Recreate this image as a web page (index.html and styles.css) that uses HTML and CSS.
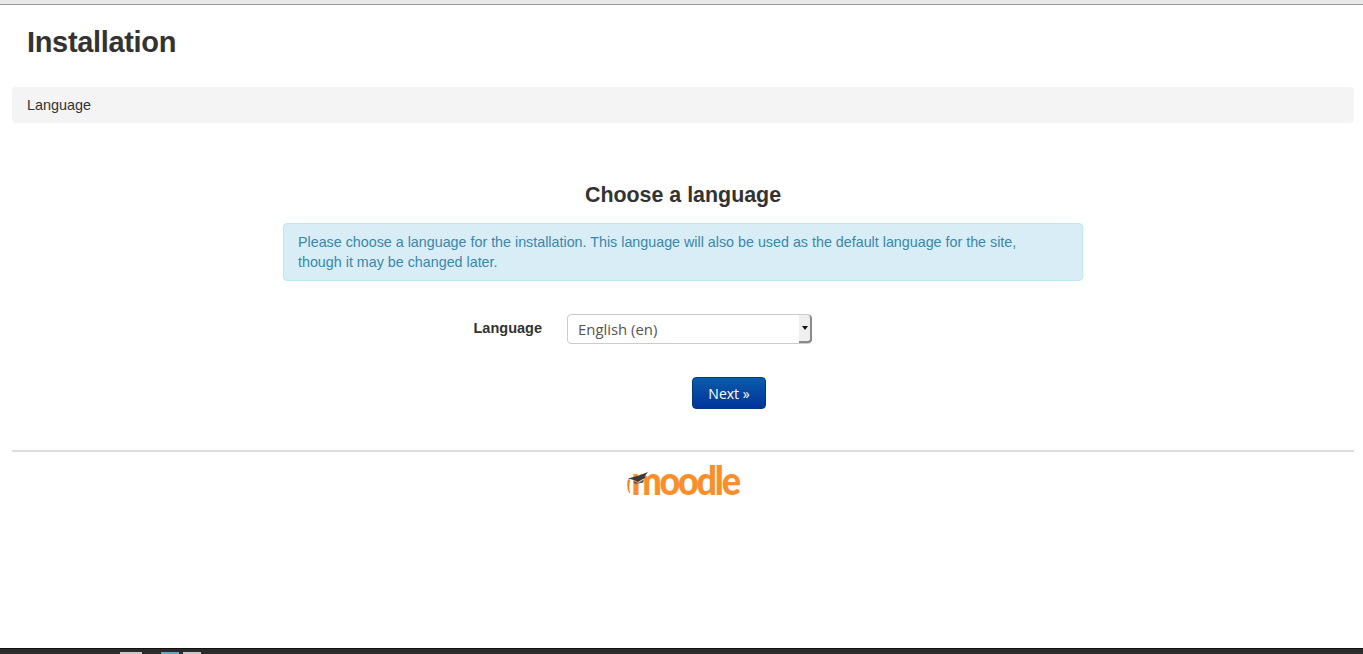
FILE: index.html
```html
<!DOCTYPE html>
<html lang="en">
<head>
<meta charset="utf-8">
<title>Installation</title>
<link rel="stylesheet" href="styles.css">
</head>
<body>
<div class="browser-top"></div>
<div class="page">
  <h1 class="page-title">Installation</h1>
  <nav class="crumb">Language</nav>
  <main class="content">
    <h2 class="section-title">Choose a language</h2>
    <div class="alert">Please choose a language for the installation. This language will also be used as the default language for the site, though it may be changed later.</div>
    <form class="form">
      <div class="form-row">
        <label class="form-label" for="lang">Language</label>
        <div class="select-wrap">
          <select id="lang" class="select"><option>English (en)</option></select>
          <span class="select-btn"><svg width="6" height="4" viewBox="0 0 6 4"><path d="M0 0h6L3 4z" fill="#111"/></svg></span>
        </div>
      </div>
      <div class="form-actions"><button type="button" class="btn">Next »</button></div>
    </form>
  </main>
  <footer class="footer">
    <div class="logo">
      <svg class="logo-cap" width="24" height="24" viewBox="0 0 24 24">
        <path d="M1 6.500 12 3.500 21 0 17.500 4.500 18.500 5.500 11 10 7 8z" fill="#3a3a3a"/>
        <path d="M6.500 9 11 11 16.500 7.500V10.500Q11 12 7 11.500z" fill="#5a5a5a"/>
        <path d="M2 7V11" stroke="#8a8a8a" stroke-width="1" fill="none"/>
        <path d="M1 7.500Q-1 14 2 21L3 21Q1.500 14 3 8.500z" fill="#f98012"/>
      </svg>
      <span class="logo-text">moodle</span>
    </div>
  </footer>
</div>
<div class="taskbar"><span class="tb-a"></span><span class="tb-b"></span><span class="tb-c"></span></div>
</body>
</html>
```
FILE: styles.css
```css
html, body { margin: 0; padding: 0; }
body {
  height: 654px;
  overflow: hidden;
  display: flex;
  flex-direction: column;
  background: #fff;
  color: #333;
  font-family: "Liberation Sans", Arial, sans-serif;
  font-size: 14.4px;
}
.browser-top {
  height: 4px;
  background: #e9e9e9;
  border-bottom: 1px solid #999;
  flex: none;
}
.page {
  flex: 1;
  padding: 0 9px 0 12px;
  min-height: 0;
}
.page-title {
  margin: 0;
  padding: 19px 0 0 15px;
  height: 63px;
  box-sizing: border-box;
  font-size: 29px;
  letter-spacing: -0.33px;
  line-height: 37px;
  font-weight: 700;
  color: #333;
}
.crumb {
  margin-top: 19px;
  height: 36px;
  box-sizing: border-box;
  padding: 0 15px;
  line-height: 36px;
  background: #f4f4f4;
  border-radius: 4px;
  color: #333;
}
.content {
  display: flex;
  flex-direction: column;
  align-items: center;
  padding-top: 57px;
  height: 329px;
  box-sizing: border-box;
  border-bottom: 2px solid #ddd;
}
.section-title {
  margin: 0;
  font-size: 21.4px;
  line-height: 30px;
  font-weight: 700;
  color: #333;
}
.alert {
  box-sizing: border-box;
  width: 800px;
  height: 58px;
  margin-top: 13px;
  padding: 8px 50px 8px 14px;
  background: #d9edf7;
  border: 1px solid #bce8f1;
  border-radius: 4px;
  color: #3a87ad;
  font-size: 14.3px;
  line-height: 20px;
}
.form {
  width: 800px;
  margin-top: 33px;
}
.form-row {
  display: flex;
  align-items: flex-start;
  height: 30px;
}
.form-label {
  width: 259px;
  box-sizing: border-box;
  text-align: right;
  font-family: "Liberation Sans", sans-serif;
  font-weight: 700;
  font-size: 14.5px;
  line-height: 28px;
  color: #333;
}
.select-wrap {
  position: relative;
  margin-left: 25px;
  width: 245px;
  height: 30px;
}
.select {
  appearance: none;
  display: block;
  width: 245px;
  height: 30px;
  box-sizing: border-box;
  padding: 0 0 0 10px;
  background: #fff;
  border: 1px solid #ccc;
  border-radius: 4px;
  font-family: "Open Sans", sans-serif;
  font-size: 14.9px;
  color: #555;
}
.select-btn {
  position: absolute;
  top: 1px;
  right: 0;
  width: 13px;
  height: 28px;
  box-sizing: border-box;
  display: flex;
  align-items: center;
  justify-content: center;
  background: #efefef;
  border-right: 2px solid #8a8a8a;
  border-bottom: 2px solid #8a8a8a;
  border-radius: 0 4px 4px 0;
}
.form-actions {
  margin-top: 33px;
  padding-left: 409px;
}
.btn {
  width: 74px;
  height: 32px;
  padding: 1px 0 0;
  border: 1px solid #003b82;
  border-radius: 4px;
  background: linear-gradient(#0a5ba8, #00349b);
  color: #fff;
  font-family: "Open Sans", sans-serif;
  font-size: 14px;
  line-height: 30px;
}
.footer {
  display: flex;
  justify-content: center;
  padding-top: 9px;
  padding-right: 1px;
}
.logo {
  position: relative;
  height: 40px;
  width: 112px;
}
.logo-cap {
  position: absolute;
  left: 0;
  top: 11px;
  z-index: 1;
}
.logo-text {
  display: block;
  padding-left: 5px;
  font-family: "Lato", sans-serif;
  font-weight: 900;
  font-size: 36px;
  line-height: 40px;
  letter-spacing: -2.3px;
  color: #f98e2a;
  transform: scaleY(1.1);
  transform-origin: 0 32px;
}
.taskbar {
  flex: none;
  height: 6px;
  background: #2b2b2b;
  border-top: 1px solid #111;
  box-sizing: border-box;
  display: flex;
  align-items: flex-end;
  padding-left: 120px;
}
.tb-a, .tb-b, .tb-c { display: block; height: 2px; background: #c8c8c8; }
.tb-a { width: 22px; }
.tb-b { width: 18px; margin-left: 19px; background: #6aa2c8; }
.tb-c { width: 18px; margin-left: 4px; }
```
